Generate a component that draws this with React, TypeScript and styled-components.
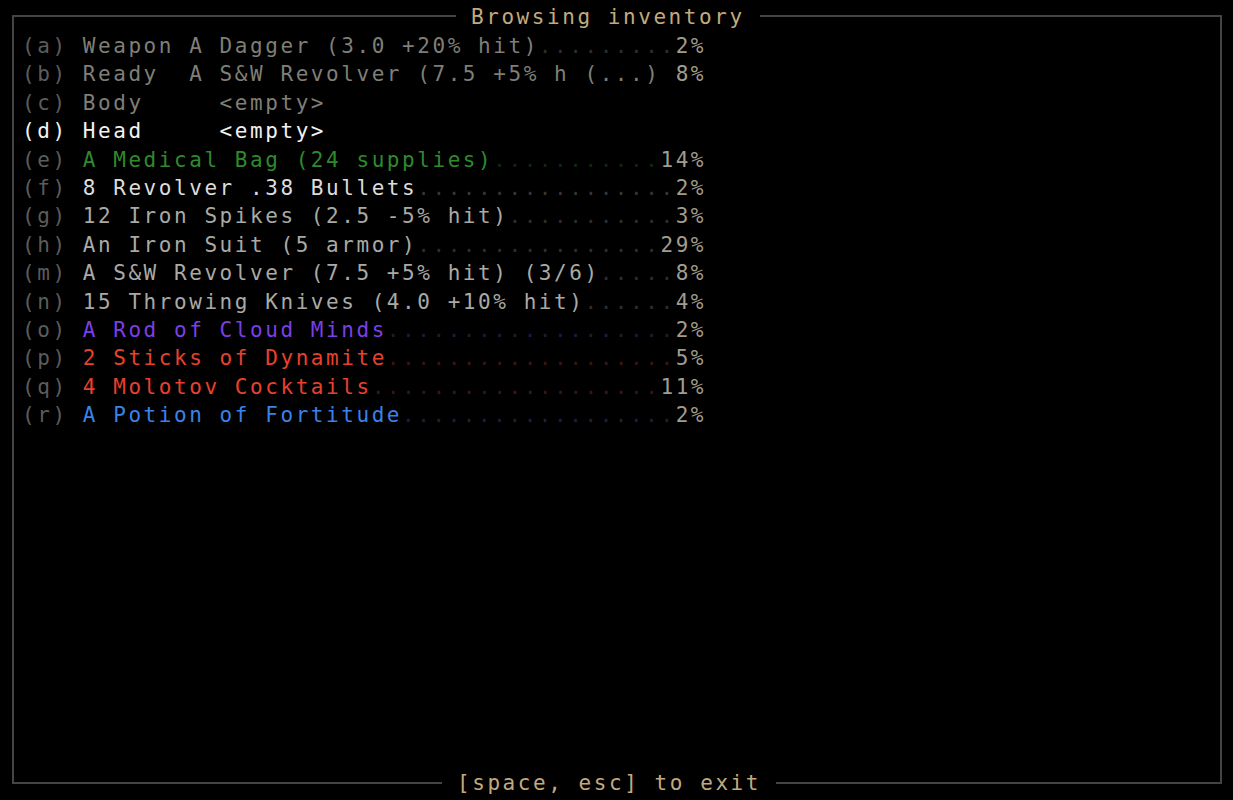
import React from "react";
import styled, { createGlobalStyle } from "styled-components";

const GlobalStyle = createGlobalStyle`
  html, body {
    margin: 0;
    padding: 0;
    background: #000;
  }
  #root {
    width: 1233px;
    height: 800px;
  }
`;

const COLS = 45;
const CELL = 15.2;
const ROW = 28.4;
const FONT = 21;

type Item = {
  key: string;
  text: string;
  color: string;
  leader: string;
  pct?: string;
  active?: boolean;
};

const items: Item[] = [
  { key: "a", text: "Weapon A Dagger (3.0 +20% hit)", color: "#7f7e77", leader: "#2e2e2c", pct: "2%" },
  { key: "b", text: "Ready  A S&W Revolver (7.5 +5% h (...)", color: "#7f7e77", leader: "#000", pct: "8%" },
  { key: "c", text: "Body     <empty>", color: "#7f7e77", leader: "#000" },
  { key: "d", text: "Head     <empty>", color: "#f2f2f2", leader: "#000", active: true },
  { key: "e", text: "A Medical Bag (24 supplies)", color: "#2f8a2c", leader: "#10280f", pct: "14%" },
  { key: "f", text: "8 Revolver .38 Bullets", color: "#dcdcdc", leader: "#353535", pct: "2%" },
  { key: "g", text: "12 Iron Spikes (2.5 -5% hit)", color: "#a9a9a6", leader: "#2e2e2d", pct: "3%" },
  { key: "h", text: "An Iron Suit (5 armor)", color: "#a9a9a6", leader: "#2e2e2d", pct: "29%" },
  { key: "m", text: "A S&W Revolver (7.5 +5% hit) (3/6)", color: "#a9a9a6", leader: "#2e2e2d", pct: "8%" },
  { key: "n", text: "15 Throwing Knives (4.0 +10% hit)", color: "#a9a9a6", leader: "#2e2e2d", pct: "4%" },
  { key: "o", text: "A Rod of Cloud Minds", color: "#7a3fe6", leader: "#221a3c", pct: "2%" },
  { key: "p", text: "2 Sticks of Dynamite", color: "#e8402c", leader: "#3c1610", pct: "5%" },
  { key: "q", text: "4 Molotov Cocktails", color: "#e8402c", leader: "#3c1610", pct: "11%" },
  { key: "r", text: "A Potion of Fortitude", color: "#3a82e8", leader: "#142440", pct: "2%" },
];

const Screen = styled.div`
  box-sizing: border-box;
  width: 1233px;
  height: 800px;
  padding: 15px 0 0 12px;
  background: #000;
  font-family: "DejaVu Sans Mono", "Liberation Mono", monospace;
  font-size: ${FONT}px;
  letter-spacing: ${CELL - FONT * 0.602}px;
  white-space: pre;
`;

const Frame = styled.div`
  box-sizing: border-box;
  width: 1210px;
  height: 769px;
  border: 2px solid #444444;
  display: flex;
  flex-direction: column;
`;

const EdgeCaption = styled.div<{ $inset: number; $edge: "top" | "bottom" }>`
  display: flex;
  height: 28px;
  align-items: center;
  padding-left: ${(p) => p.$inset}px;
  margin-top: ${(p) => (p.$edge === "top" ? "-14px" : "0")};
  margin-bottom: ${(p) => (p.$edge === "bottom" ? "-15px" : "0")};
`;

const CaptionText = styled.span`
  background: #000;
  color: #c2aa7c;
  padding: 0 15px;
  line-height: 28px;
`;

const List = styled.div`
  flex: 1;
  display: flex;
  flex-direction: column;
  padding: 1px 0 0 8px;
`;

const Row = styled.div`
  display: flex;
  height: ${ROW}px;
  line-height: ${ROW}px;
`;

const Key = styled.span<{ $active?: boolean }>`
  color: ${(p) => (p.$active ? "#f2f2f2" : "#5c5c5a")};
`;

const Name = styled.span<{ $color: string }>`
  color: ${(p) => p.$color};
`;

const Leader = styled.span<{ $color: string }>`
  color: ${(p) => p.$color};
`;

const Pct = styled.span`
  color: #a19d8e;
`;

function ItemRow({ item }: { item: Item }) {
  const used = 4 + item.text.length + (item.pct ? item.pct.length : 0);
  const fill = item.pct ? Math.max(COLS - used, 0) : 0;
  const leader = item.key === "b" ? " ".repeat(fill) : ".".repeat(fill);
  return (
    <Row>
      <Key $active={item.active}>({item.key}) </Key>
      <Name $color={item.color}>{item.text}</Name>
      {fill > 0 && <Leader $color={item.leader}>{leader}</Leader>}
      {item.pct && <Pct>{item.pct}</Pct>}
    </Row>
  );
}

export default function App() {
  return (
    <>
      <GlobalStyle />
      <Screen>
        <Frame>
          <EdgeCaption $inset={442} $edge="top">
            <CaptionText>Browsing inventory</CaptionText>
          </EdgeCaption>
          <List>
            {items.map((it) => (
              <ItemRow key={it.key} item={it} />
            ))}
          </List>
          <EdgeCaption $inset={428} $edge="bottom">
            <CaptionText>[space, esc] to exit</CaptionText>
          </EdgeCaption>
        </Frame>
      </Screen>
    </>
  );
}
